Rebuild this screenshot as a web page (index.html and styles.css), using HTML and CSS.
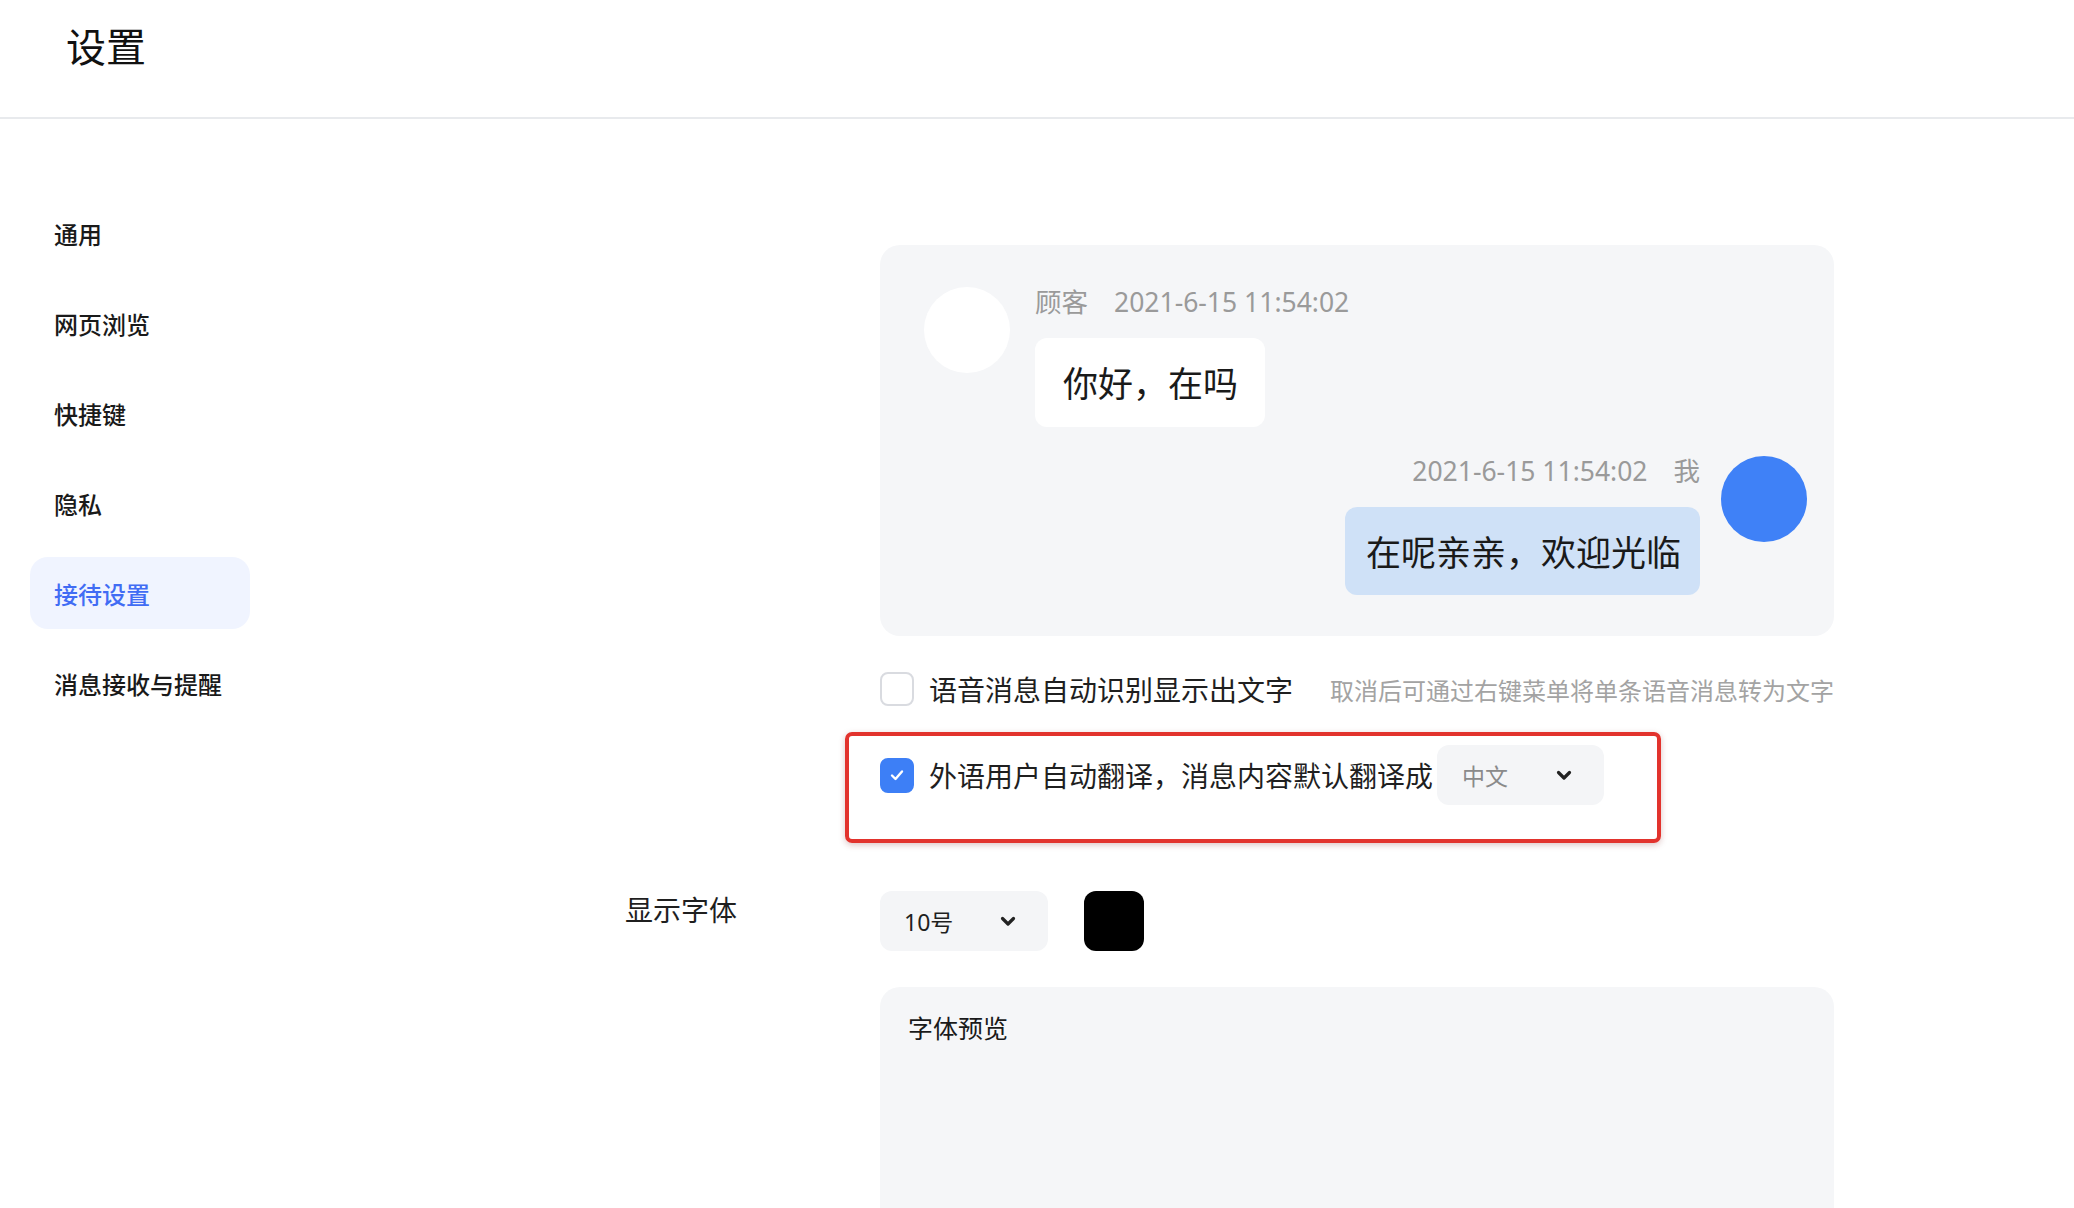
FILE: index.html
```html
<!DOCTYPE html>
<html lang="zh-CN">
<head>
<meta charset="utf-8">
<title>设置</title>
<link rel="stylesheet" href="styles.css">
</head>
<body>
<header class="header">
  <h1 class="title">设置</h1>
</header>
<div class="layout">
  <nav class="sidebar">
    <a class="nav-item">通用</a>
    <a class="nav-item">网页浏览</a>
    <a class="nav-item">快捷键</a>
    <a class="nav-item">隐私</a>
    <a class="nav-item active">接待设置</a>
    <a class="nav-item">消息接收与提醒</a>
  </nav>
  <main class="main">
    <div class="row row-chat">
      <div class="row-label"></div>
      <div class="row-content">
        <div class="chat-box">
          <div class="msg msg-left">
            <div class="avatar avatar-white"></div>
            <div class="msg-body">
              <div class="meta"><span class="meta-name">顾客</span><span>2021-6-15 11:54:02</span></div>
              <div class="bubble bubble-white">你好，在吗</div>
            </div>
          </div>
          <div class="msg msg-right">
            <div class="avatar avatar-blue"></div>
            <div class="msg-body msg-body-right">
              <div class="meta"><span>2021-6-15 11:54:02</span><span class="meta-me">我</span></div>
              <div class="bubble bubble-blue">在呢亲亲，欢迎光临</div>
            </div>
          </div>
        </div>
      </div>
    </div>

    <div class="row row-check1">
      <div class="row-label"></div>
      <div class="row-content check-line">
        <span class="checkbox"></span>
        <span class="check-label">语音消息自动识别显示出文字</span>
        <span class="hint">取消后可通过右键菜单将单条语音消息转为文字</span>
      </div>
    </div>

    <div class="row row-check2">
      <div class="row-label"></div>
      <div class="row-content check-line annotated">
        <span class="checkbox checked">
          <svg width="20" height="20" viewBox="0 0 20 20"><polyline points="5,10.5 8.5,14 15,6.5" fill="none" stroke="#fff" stroke-width="2.4" stroke-linecap="round" stroke-linejoin="round"/></svg>
        </span>
        <span class="check-label">外语用户自动翻译，消息内容默认翻译成</span>
        <div class="select select-lang">
          <span class="select-text muted">中文</span>
          <svg class="chevron" width="16" height="11" viewBox="0 0 16 11"><polyline points="2.5,2.5 8,8 13.5,2.5" fill="none" stroke="#222" stroke-width="3.2" stroke-linecap="round" stroke-linejoin="round"/></svg>
        </div>
        <div class="red-mark"></div>
      </div>
    </div>

    <div class="row row-font">
      <div class="row-label font-label">显示字体</div>
      <div class="row-content font-controls">
        <div class="select">
          <span class="select-text">10号</span>
          <svg class="chevron" width="16" height="11" viewBox="0 0 16 11"><polyline points="2.5,2.5 8,8 13.5,2.5" fill="none" stroke="#222" stroke-width="3.2" stroke-linecap="round" stroke-linejoin="round"/></svg>
        </div>
        <div class="swatch"></div>
      </div>
    </div>

    <div class="row row-preview">
      <div class="row-label"></div>
      <div class="row-content">
        <div class="preview">字体预览</div>
      </div>
    </div>
  </main>
</div>
</body>
</html>
```

FILE: styles.css
```css
html, body {
  margin: 0;
  padding: 0;
  overflow: hidden;
  background: #ffffff;
}
body {
  font-family: "Noto Sans", "Noto Sans CJK SC", sans-serif;
  color: #1f1f1f;
}
.header {
  border-bottom: 2px solid #e8eaed;
  padding: 26px 0 0 66px;
  box-sizing: content-box;
  height: 91px;
}
.title {
  margin: 0;
  font-size: 40px;
  line-height: 42px;
  font-weight: 400;
  color: #111;
}
.layout {
  display: flex;
}
.sidebar {
  width: 625px;
  flex: none;
  box-sizing: border-box;
  padding: 78px 0 0 30px;
  display: flex;
  flex-direction: column;
  gap: 18px;
}
.nav-item {
  width: 220px;
  height: 72px;
  box-sizing: border-box;
  padding-left: 24px;
  display: flex;
  align-items: center;
  font-size: 24px;
  font-weight: 500;
  color: #1a1a1a;
  border-radius: 18px;
}
.nav-item.active {
  background: #f0f4ff;
  color: #416cf4;
}
.main {
  padding-top: 126px;
  display: flex;
  flex-direction: column;
}
.row {
  display: flex;
}
.row-label {
  width: 255px;
  flex: none;
}
.row-content {
  width: 954px;
  flex: none;
}
/* chat preview */
.chat-box {
  background: #f5f6f8;
  border-radius: 20px;
  padding: 42px 27px 41px 44px;
  display: flex;
  flex-direction: column;
  gap: 29px;
}
.msg {
  display: flex;
  align-items: flex-start;
}
.msg-left {
  gap: 25px;
}
.msg-right {
  flex-direction: row-reverse;
  gap: 21px;
}
.avatar {
  width: 86px;
  height: 86px;
  border-radius: 50%;
  flex: none;
}
.avatar-white { background: #ffffff; }
.avatar-blue { background: #3f81f7; }
.msg-body {
  display: flex;
  flex-direction: column;
  align-items: flex-start;
}
.msg-body-right {
  align-items: flex-end;
}
.meta {
  font-size: 26.5px;
  line-height: 30px;
  color: #9a9a9a;
  margin-top: 0;
  margin-bottom: 21px;
  display: flex;
  gap: 26px;
}
.bubble {
  height: 89px;
  box-sizing: border-box;
  display: flex;
  align-items: center;
  font-size: 35px;
  color: #1a1a1a;
  border-radius: 12px;
  padding-bottom: 2px;
}
.bubble-white {
  background: #ffffff;
  padding-left: 28px;
  padding-right: 27px;
}
.bubble-blue {
  background: #cfe1f7;
  padding-left: 21px;
  padding-right: 19px;
  height: 88px;
}
/* checkbox rows */
.row-check1 { margin-top: 36px; }
.row-check2 { margin-top: 39px; }
.check-line {
  display: flex;
  align-items: center;
}
.row-check1 .check-line { height: 34px; }
.row-check2 .check-line { height: 60px; }
.annotated { position: relative; }
.checkbox {
  width: 34px;
  height: 34px;
  box-sizing: border-box;
  border: 2px solid #d9dbe0;
  border-radius: 8px;
  background: #fff;
  flex: none;
  margin-right: 15px;
  display: flex;
  align-items: center;
  justify-content: center;
}
.checkbox.checked {
  background: #3d7ff6;
  border-color: #3d7ff6;
  height: 35px;
}
.check-label {
  font-size: 28px;
  color: #1f1f1f;
  white-space: nowrap;
}
.hint {
  margin-left: auto;
  font-size: 24px;
  color: #a3a3a3;
  white-space: nowrap;
}
.select {
  width: 168px;
  height: 60px;
  box-sizing: border-box;
  background: #f4f5f7;
  border-radius: 12px;
  padding: 0 32px 0 24px;
  display: flex;
  align-items: center;
  justify-content: space-between;
  flex: none;
}
.select-lang {
  margin-left: 4px;
  width: 167px;
  padding-left: 25px;
}
.select-text {
  font-size: 23px;
  color: #1f1f1f;
}
.select-text.muted {
  color: #8a8a8a;
}
.chevron { display: block; }
.red-mark {
  position: absolute;
  left: -35px;
  top: -13px;
  width: 816px;
  height: 111px;
  box-sizing: border-box;
  border: 4px solid #e2332d;
  border-radius: 7px;
  box-shadow: 0 2px 6px rgba(120, 20, 20, 0.25);
  pointer-events: none;
}
/* font row */
.row-font { margin-top: 86px; }
.font-label {
  font-size: 28px;
  line-height: 38px;
  color: #1f1f1f;
}
.font-controls {
  display: flex;
  align-items: center;
  gap: 36px;
}
.swatch {
  width: 60px;
  height: 60px;
  background: #000;
  border-radius: 12px;
}
.row-preview { margin-top: 36px; }
.preview {
  background: #f5f6f8;
  border-radius: 20px;
  height: 300px;
  box-sizing: border-box;
  padding: 23px 28px;
  font-size: 25px;
  line-height: 36px;
  color: #1a1a1a;
}
```
